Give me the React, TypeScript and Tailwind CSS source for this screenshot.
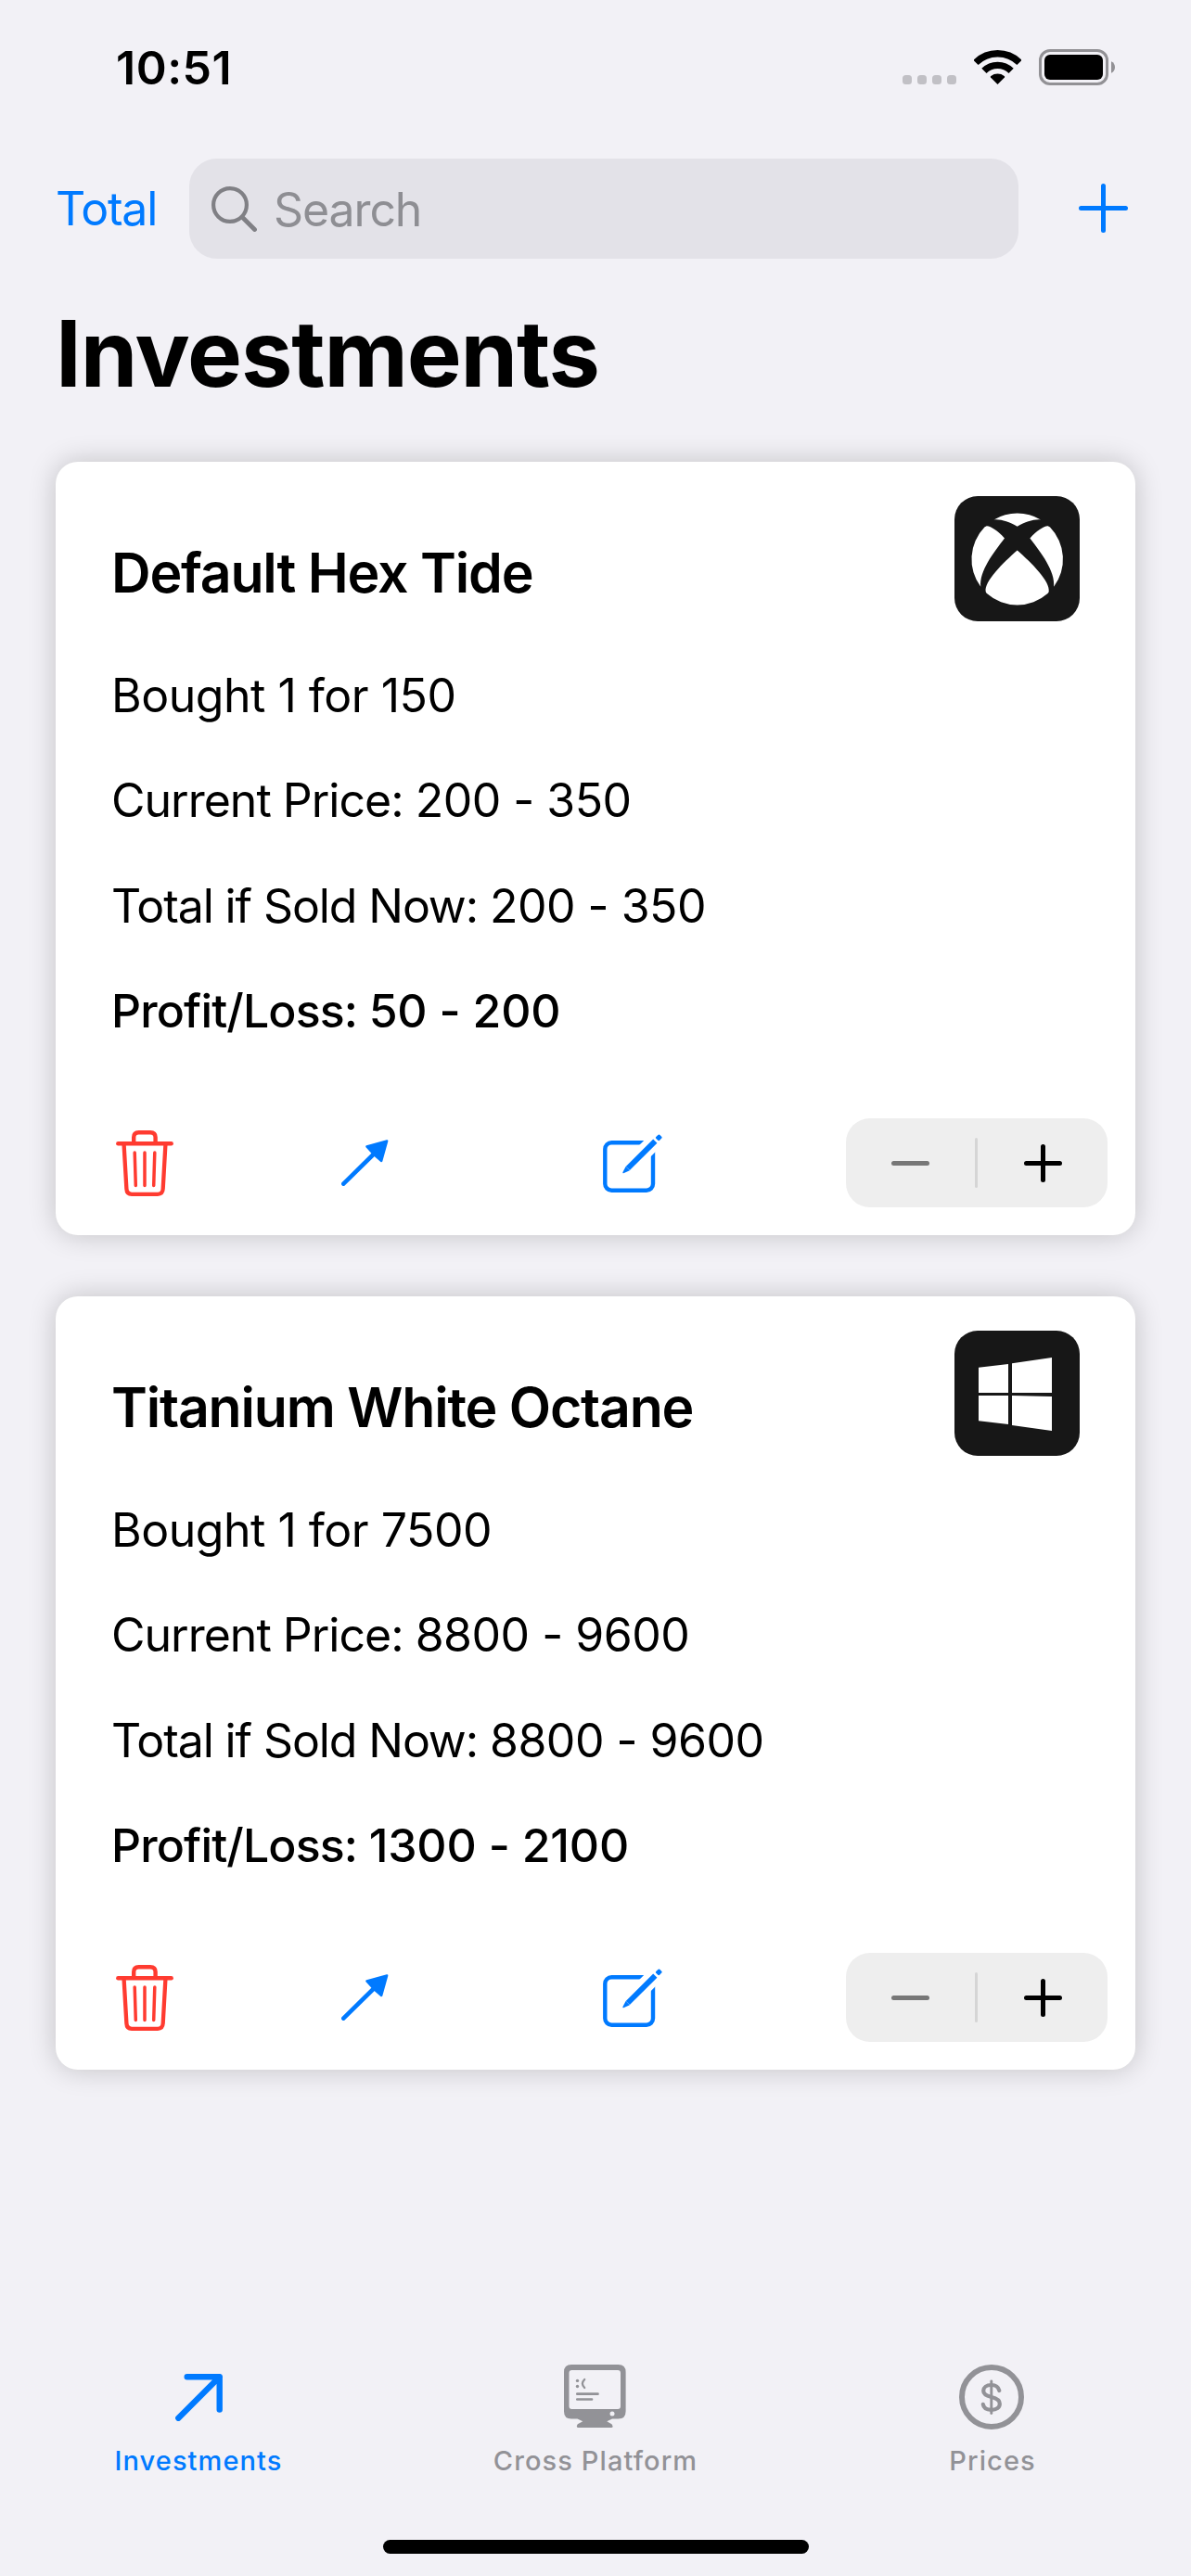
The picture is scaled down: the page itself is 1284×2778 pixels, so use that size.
import type { ReactNode } from "react";

type Investment = {
  name: string;
  platform: "xbox" | "windows";
  quantity: number;
  cost: number;
  price: string;
  total: string;
  profit: string;
};

const investments: Investment[] = [
  {
    name: "Default Hex Tide",
    platform: "xbox",
    quantity: 1,
    cost: 150,
    price: "200 - 350",
    total: "200 - 350",
    profit: "50 - 200",
  },
  {
    name: "Titanium White Octane",
    platform: "windows",
    quantity: 1,
    cost: 7500,
    price: "8800 - 9600",
    total: "8800 - 9600",
    profit: "1300 - 2100",
  },
];

function StatusBar() {
  return (
    <header className="flex h-[145px] shrink-0 items-center justify-between pl-[125px] pr-[82px]">
      <span className="mt-px text-[50px] font-semibold leading-[60px] tracking-[0.5px]">10:51</span>
      <div className="flex items-center">
        <div className="mt-[27px] flex gap-[6px]">
          {[0, 1, 2, 3].map((dot) => (
            <span key={dot} className="h-[10px] w-[10px] rounded-[3.5px] bg-[#c1c0c5]" />
          ))}
        </div>
        <svg className="ml-[19px] h-[37px] w-[51px]" viewBox="0 0 51 37" fill="none">
          <path d="M2 13.5A33.3 33.3 0 0 1 49 13.5" stroke="#000" strokeWidth="7.4" />
          <path d="M10.9 22.4A20.7 20.7 0 0 1 40.1 22.4" stroke="#000" strokeWidth="7.4" />
          <path d="M25.5 37L18 29.6Q17.4 28.7 18.3 28A11.8 11.8 0 0 1 32.7 28Q33.6 28.7 33 29.6Z" fill="#000" />
        </svg>
        <svg className="ml-[19px] h-[39px] w-[82px]" viewBox="0 0 82 39" fill="none">
          <rect x="1.5" y="1.5" width="72" height="36" rx="10.5" stroke="#929195" strokeWidth="3" />
          <rect x="6" y="6" width="63" height="27" rx="6" fill="#000" />
          <path d="M78 13.2C80.6 14.2 82 16.6 82 19.5S80.6 24.8 78 25.8Z" fill="#929195" />
        </svg>
      </div>
    </header>
  );
}

function NavigationBar() {
  return (
    <nav className="mt-[26px] flex h-[108px] shrink-0 items-center text-[50px] leading-[60px]">
      <a className="ml-[60px] w-[144px] tracking-[-1.2px] text-[#007aff]">Total</a>
      <div className="flex h-[108px] w-[894px] items-center rounded-[30px] bg-[#e3e2e8] pl-[24px]">
        <svg className="h-[49px] w-[49px]" viewBox="0 0 49 49" fill="none" stroke="#808085" strokeLinecap="round">
          <circle cx="20" cy="20" r="17.9" strokeWidth="4.2" />
          <path d="M33 33L46.5 46.5" strokeWidth="4.8" />
        </svg>
        <span className="ml-[18px] mt-[2px] tracking-[-1.1px] text-[#8e8e93]">Search</span>
      </div>
      <svg className="mb-px ml-[65px] h-[53px] w-[53px]" viewBox="0 0 53 53" stroke="#007aff" strokeWidth="5" strokeLinecap="round">
        <path d="M26.5 2.5V50.5M2.5 26.5H50.5" />
      </svg>
    </nav>
  );
}

function PlatformBadge({ platform }: { platform: Investment["platform"] }) {
  return (
    <div className="h-[135px] w-[135px] rounded-[25px] bg-[#171717]">
      <svg className="h-full w-full" viewBox="0 0 135 135" fill="#fff">
        {platform === "xbox" ? (
          <>
            <path d="M42.5 25.4A49.5 49.5 0 0 1 93 25.4C85.5 24.6 77 27.6 67.7 32.7C58.5 27.6 50 24.6 42.5 25.4Z" />
            <path d="M34.3 32.4C38.5 31.8 46.5 37.5 54 45.4C42 61 26.5 81 28.3 97.7A49.5 49.5 0 0 1 32.4 33.6Q33.2 32.6 34.3 32.4Z" />
            <path d="M101.1 32.4C96.9 31.8 88.9 37.5 81.4 45.4C93.4 61 108.9 81 107.1 97.7A49.5 49.5 0 0 0 103 33.6Q102.2 32.6 101.1 32.4Z" />
            <path d="M67.7 58.5C83 72 103.5 92 101.7 103Q101.6 104 100.5 105A49.5 49.5 0 0 1 34.9 105Q33.8 104 33.7 103C31.9 92 52.4 72 67.7 58.5Z" />
          </>
        ) : (
          <>
            <path d="M26 39.7L58 36V67H26Z" />
            <path d="M62 35.2L105 29V67H62Z" />
            <path d="M26 70H58V101L26 97.3Z" />
            <path d="M62 70L105 71V108L62 102Z" />
          </>
        )}
      </svg>
    </div>
  );
}

function TrashIcon() {
  return (
    <svg className="h-[71px] w-[62px]" viewBox="0 0 62 71" fill="none" stroke="#ff3b30" strokeLinecap="round" strokeLinejoin="round">
      <path d="M2.3 14.3H59.7" strokeWidth="4.4" />
      <path d="M19.2 13V7.5Q19.2 2.2 24.5 2.2H37Q42.6 2.2 42.6 7.5V13" strokeWidth="4.4" strokeLinecap="butt" />
      <path d="M8.6 15.5L11.4 63Q11.7 68.8 17 68.8H45Q50.4 68.8 50.7 63L53.4 15.5" strokeWidth="4.3" strokeLinecap="butt" />
      <path d="M20.2 24L21.3 59.5M31 24V59.5M41.8 24L40.7 59.5" strokeWidth="3.5" />
    </svg>
  );
}

function MoveIcon() {
  return (
    <svg className="h-[50px] w-[51px]" viewBox="0 0 51 50" stroke="#007aff" strokeLinecap="round" strokeLinejoin="round">
      <path d="M2.3 47.7L37 13.5" strokeWidth="4.6" />
      <path d="M49.2 1.4L27.4 7.4L34 14.6L36.3 17L43.2 23Z" fill="#007aff" strokeWidth="2.4" />
    </svg>
  );
}

function EditIcon() {
  return (
    <svg className="h-[63px] w-[64px]" viewBox="0 0 64 63" fill="none">
      <rect x="2.3" y="9.2" width="51.7" height="51.5" rx="7" stroke="#007aff" strokeWidth="4.4" />
      <path d="M29 34.5L66 -2.5" stroke="#fff" strokeWidth="17.4" />
      <path d="M26.8 37L56.3 7.6" stroke="#007aff" strokeWidth="6" />
      <path d="M24.6 34.9L28.9 39.2L22.2 42.2Q20.8 42.4 21.5 40.9Z" fill="#007aff" />
      <path d="M58.2 3.9L60.3 1.8L62.3 3.7L60.2 5.9Z" fill="#007aff" stroke="#007aff" strokeWidth="2.6" strokeLinejoin="round" />
    </svg>
  );
}

function Stepper() {
  return (
    <div className="flex h-[96px] w-[282px] items-center rounded-[26px] bg-[#eeeeee]">
      <button className="flex w-[139px] justify-center">
        <span className="h-[5px] w-[41px] rounded-full bg-[#777777]" />
      </button>
      <span className="h-[54px] w-[3px] rounded-full bg-[#d5d5d5]" />
      <button className="flex flex-1 justify-center pl-px">
        <svg className="h-[41px] w-[41px]" viewBox="0 0 41 41" stroke="#000" strokeWidth="5" strokeLinecap="round">
          <path d="M20.5 2.5V38.5M2.5 20.5H38.5" />
        </svg>
      </button>
    </div>
  );
}

function InvestmentCard({ item }: { item: Investment }) {
  return (
    <article className="flex h-[834px] flex-col rounded-[24px] bg-white shadow-[0_0_30px_rgba(0,0,0,0.2)]">
      <div className="mt-[37px] flex h-[135px] justify-between pl-[60px] pr-[60px]">
        <h2 className="mt-[47px] whitespace-nowrap text-[59px] font-semibold leading-[72px] tracking-[-1.2px]">{item.name}</h2>
        <PlatformBadge platform={item.platform} />
      </div>
      <div className="mt-[24px] whitespace-nowrap pl-[60px] text-[50px] leading-[113.3px] tracking-[-0.5px]">
        <p>
          Bought {item.quantity} for {item.cost}
        </p>
        <p>
          <span className="tracking-[-1px]">Current Price: </span>
          {item.price}
        </p>
        <p>
          <span className="tracking-[-1.1px]">Total if Sold Now: </span>
          {item.total}
        </p>
        <p className="font-medium tracking-[-0.2px]">
          <span className="tracking-[-0.85px]">Profit/Loss: </span>
          {item.profit}
        </p>
      </div>
      <div className="mb-[30px] mt-auto flex h-[96px] items-center pl-[65px] pr-[30px]">
        <TrashIcon />
        <div className="ml-[181px]">
          <MoveIcon />
        </div>
        <div className="ml-[231px]">
          <EditIcon />
        </div>
        <div className="ml-auto">
          <Stepper />
        </div>
      </div>
    </article>
  );
}

function Tab({ label, active, children }: { label: string; active?: boolean; children: ReactNode }) {
  return (
    <button className={active ? "flex flex-1 flex-col items-center text-[#007aff]" : "flex flex-1 flex-col items-center text-[#929297]"}>
      <span className="flex h-[70px] items-center">{children}</span>
      <span className="mt-[16px] whitespace-nowrap text-[29px] font-medium leading-[36px] tracking-[1.1px]">{label}</span>
    </button>
  );
}

function TabBar() {
  return (
    <footer className="flex h-[189px] shrink-0">
      <Tab label="Investments" active>
        <svg className="h-[51px] w-[51px]" viewBox="0 0 51 51" fill="none" stroke="currentColor" strokeWidth="6.4" strokeLinecap="round" strokeLinejoin="round">
          <path d="M3.3 47.7L47.7 3.3M12.7 3.3H47.7V38.5" />
        </svg>
      </Tab>
      <Tab label="Cross Platform">
        <svg className="mb-[2px] mr-px h-[68px] w-[67px]" viewBox="0 0 67 68" fill="none" stroke="currentColor" strokeLinecap="round">
          <path
            d="M8 0H58.5Q66.6 0 66.6 8V50.5Q66.6 58.5 58.5 58.5H52L46.3 61.3L51.5 64.2Q54 68 51 68H15.5Q12.5 68 14.7 64.2L20.3 61.3L14.5 58.5H8Q0 58.5 0 50.5V8Q0 0 8 0ZM8.5 6Q5.5 6 5.5 9V45Q5.5 48 8.5 48H58Q61 48 61 45V9Q61 6 58 6Z"
            fill="currentColor"
            fillRule="evenodd"
            stroke="none"
          />
          <circle cx="52" cy="53" r="2.5" fill="#f2f1f6" stroke="none" />
          <circle cx="14.5" cy="17.4" r="1.7" fill="currentColor" stroke="none" />
          <circle cx="14.5" cy="23.5" r="1.7" fill="currentColor" stroke="none" />
          <path d="M22.2 16Q17.6 20.5 22.2 25" strokeWidth="2.3" />
          <path d="M14.3 31.7H36.5M14.3 37.5H30" strokeWidth="2.7" />
        </svg>
      </Tab>
      <Tab label="Prices">
        <svg className="mr-[2px] h-[70px] w-[70px]" viewBox="0 0 70 70" fill="none" stroke="currentColor" strokeLinecap="round">
          <circle cx="35" cy="35" r="32" strokeWidth="6" />
          <path d="M34.8 18V52.5" strokeWidth="2.9" />
          <path d="M43.3 28C42.3 24 39 22 34.8 22C29.3 22 26.2 24.8 26.2 28.3C26.2 32.3 29.6 33.8 34.8 35C40.8 36.4 43.8 38.4 43.8 42.3C43.8 46.3 40.3 48.8 34.8 48.8C29.5 48.8 26.3 46.5 25.8 42.8" strokeWidth="4.2" />
        </svg>
      </Tab>
    </footer>
  );
}

export default function App() {
  return (
    <div className="flex h-[2778px] w-[1284px] flex-col overflow-hidden bg-[#f2f1f6] font-['Inter',sans-serif] text-black">
      <StatusBar />
      <NavigationBar />
      <h1 className="ml-[60px] mt-[42px] shrink-0 text-[99px] font-bold leading-[120px] tracking-[-1.1px]">Investments</h1>
      <main className="mt-[57px] flex flex-1 flex-col gap-[66px] px-[60px]">
        {investments.map((item) => (
          <InvestmentCard key={item.name} item={item} />
        ))}
      </main>
      <TabBar />
      <div className="mb-[24px] ml-[413px] h-[15px] w-[459px] shrink-0 rounded-full bg-black" />
    </div>
  );
}
